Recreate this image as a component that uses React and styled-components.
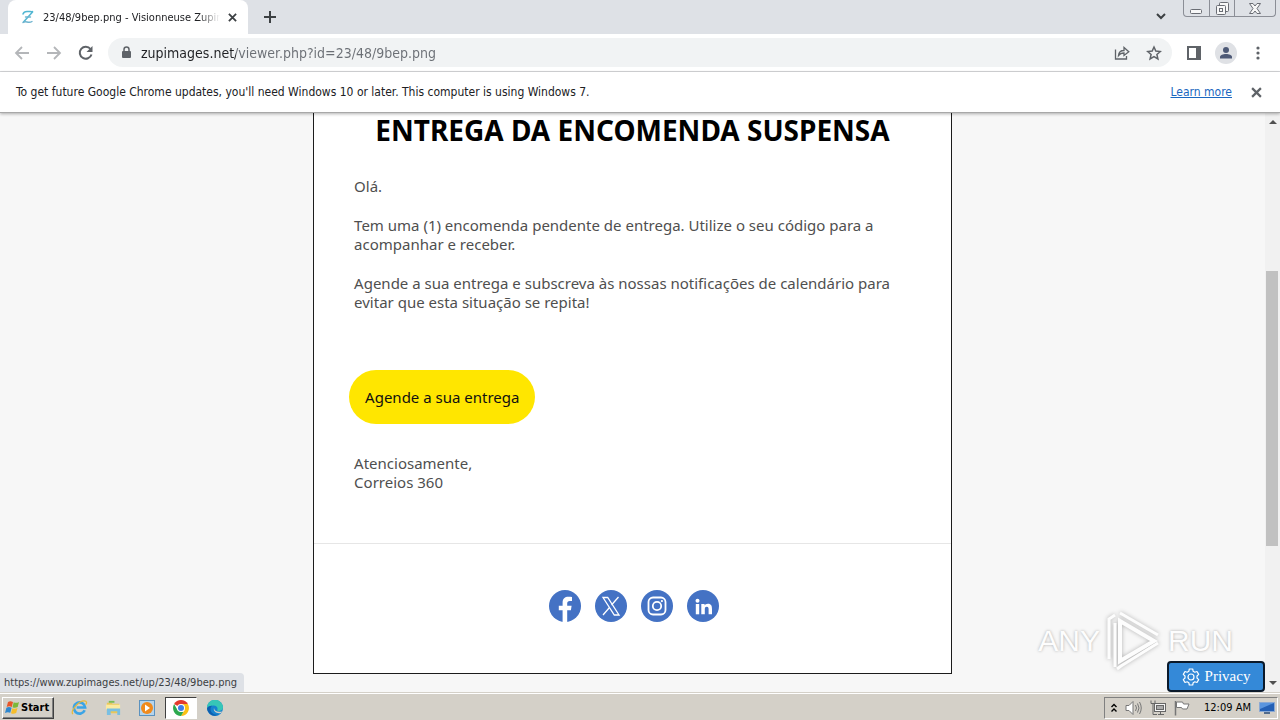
import React from 'react';
import styled, { createGlobalStyle } from 'styled-components';

const GlobalStyle = createGlobalStyle`
    * {
        box-sizing: border-box;
    }
    body {
        margin: 0;
        overflow: hidden;
        font-family: Tahoma, "DejaVu Sans Condensed", "DejaVu Sans", sans-serif;
        font-size: 12px;
        color: #202124;
    }
    svg {
        display: block;
    }
    button {
        font: inherit;
        color: inherit;
        border: 0;
        padding: 0;
        background: none;
    }
`;

const Desktop = styled.div`
    display: flex;
    flex-direction: column;
    height: 100vh;
`;

/* ---------- browser chrome ---------- */

const TabStrip = styled.header`
    display: flex;
    align-items: flex-end;
    height: 34px;
    flex: none;
    padding-left: 8px;
    background: #dee1e6;
`;

const Tab = styled.div`
    display: flex;
    align-items: center;
    width: 240px;
    height: 34px;
    margin-right: 5px;
    padding: 0 8px 0 12px;
    border-radius: 8px 8px 0 0;
    background: #fff;
`;

const TabTitle = styled.span`
    flex: 1;
    min-width: 0;
    margin: 0 4px 0 7px;
    font-size: 11px;
    white-space: nowrap;
    mask-image: linear-gradient(to right, #000 88%, transparent);
`;

const IconButton = styled.button`
    display: flex;
    align-items: center;
    justify-content: center;
    flex: none;
    width: ${props => props.$size || 32}px;
    height: ${props => props.$size || 32}px;
    border-radius: 50%;
    color: ${props => props.$color || '#5f6368'};
`;

const StripEnd = styled.div`
    display: flex;
    align-self: flex-start;
    margin-left: auto;
    padding-right: 4px;
    gap: 6px;
`;

const WindowControls = styled.div`
    display: flex;
    height: 17px;
    border: 1px solid #8b8e96;
    border-top: 0;
    border-radius: 0 0 4px 4px;
`;

const WindowButton = styled.button`
    display: flex;
    justify-content: center;
    align-items: center;
    width: ${props => (props.$wide ? 41 : 25)}px;
    color: #6a6d74;
    & + & {
        border-left: 1px solid #8b8e96;
    }
`;

const Toolbar = styled.div`
    display: flex;
    align-items: center;
    flex: none;
    height: 38px;
    padding: 0 6px;
    background: #fff;
    border-bottom: 1px solid #d6d7da;
`;

const Omnibox = styled.div`
    display: flex;
    align-items: center;
    flex: 1;
    height: 29px;
    margin: 0 6px;
    padding: 0 2px 0 12px;
    border-radius: 15px;
    background: #f1f3f4;
`;

const Address = styled.input`
    flex: 1;
    min-width: 0;
    margin-left: 9px;
    padding: 0;
    border: 0;
    outline: 0;
    font: inherit;
    font-size: 14px;
    color: transparent;
    /* host in dark, path in grey */
    background: linear-gradient(to right, #202124 95px, #6b6f75 95px);
    background-clip: text;
`;

const InfoBar = styled.div`
    display: flex;
    align-items: center;
    flex: none;
    position: relative;
    z-index: 1;
    height: 41px;
    padding: 0 12px 0 16px;
    background: #fff;
    border-bottom: 1px solid #a8a8a8;
    box-shadow: 0 1px 3px rgba(0, 0, 0, 0.3);
`;

const InfoLink = styled.a`
    margin-left: auto;
    margin-right: 12px;
    color: #1a67c0;
`;

/* ---------- page ---------- */

const Viewport = styled.main`
    position: relative;
    display: flex;
    flex: 1;
    min-height: 0;
    background: #f7f7f7;
`;

const Page = styled.div`
    flex: 1;
    min-width: 0;
    padding-bottom: 18px;
`;

const Sheet = styled.article`
    display: flex;
    flex-direction: column;
    width: 50.5%;
    margin: 0 auto;
    height: 100%;
    background: #fff;
    border: 1px solid #1c1c1c;
    border-top: 0;
`;

const Letter = styled.div`
    flex: 1;
    padding: 1px 40px 0;
    font-family: "Trebuchet MS", "Noto Sans", sans-serif;
    font-size: 15px;
    line-height: 19px;
    color: #4f4f4f;
`;

const Heading = styled.h1`
    margin: 0 0 31px;
    font-size: 28px;
    line-height: 32px;
    font-weight: 700;
    text-align: center;
    white-space: nowrap;
    color: #000;
`;

const Paragraph = styled.p`
    margin: 0 0 20px;
`;

const CallToAction = styled.button`
    height: 54px;
    margin: 58px 0 30px -5px;
    padding: 0 16px;
    border-radius: 27px;
    background: #ffe600;
    color: #111;
    display: block;
`;

const Social = styled.footer`
    display: flex;
    justify-content: center;
    gap: 14px;
    flex: none;
    height: 130px;
    padding-top: 46px;
    padding-left: 2px;
    border-top: 1px solid #e6e6e6;
`;

const SocialLink = styled.a`
    height: 32px;
`;

const ScrollBar = styled.div`
    display: flex;
    flex-direction: column;
    width: 15px;
    background: #f1f1f1;
`;

const ScrollArrow = styled.button`
    display: flex;
    align-items: center;
    justify-content: center;
    height: 18px;
    color: #505050;
`;

const ScrollGap = styled.div`
    flex: ${props => props.$share};
`;

const ScrollThumb = styled.div`
    flex: 275;
    margin: 0 2px 0 1px;
    background: #c1c1c1;
`;

const StatusBubble = styled.div`
    position: absolute;
    left: 0;
    bottom: 0;
    height: 19px;
    padding: 0 7px 0 4px;
    line-height: 20px;
    font-size: 11px;
    color: #3c4043;
    background: #dee1e6;
    border-top-right-radius: 4px;
`;

const PrivacyButton = styled.button`
    position: absolute;
    right: 15px;
    bottom: 0;
    display: flex;
    align-items: center;
    justify-content: center;
    gap: 5px;
    width: 98px;
    height: 31px;
    border: 2px solid #0b1a2b;
    border-radius: 4px;
    background: #3489d8;
    color: #fff;
    font-family: "Liberation Serif", serif;
    font-size: 15px;
`;

const Watermark = styled.div`
    position: absolute;
    right: 47px;
    bottom: 19px;
    display: flex;
    align-items: center;
    gap: 5px;
    font-family: "Liberation Sans", sans-serif;
    font-size: 30px;
    color: #fdfdfd;
    text-shadow: 0 0 3px #aaa;
    svg {
        filter: drop-shadow(0 0 2px #b0b0b0);
    }
`;

/* ---------- taskbar ---------- */

const TaskBar = styled.footer`
    display: flex;
    align-items: center;
    flex: none;
    position: relative;
    height: 28px;
    padding: 3px 2px 1px;
    background: #d4d0c8;
    border-top: 1px solid #d4d0c8;
    box-shadow: inset 0 1px 0 #fff;
    color: #000;
    font-size: 11px;
`;

const StartButton = styled.button`
    display: flex;
    align-items: center;
    gap: 1px;
    width: 52px;
    height: 22px;
    margin-right: 8px;
    padding-left: 1px;
    font-weight: 700;
    border: 1px solid;
    border-color: #fff #404040 #404040 #fff;
    box-shadow: inset -1px -1px 0 #808080;
`;

const TaskButton = styled.button`
    display: flex;
    align-items: center;
    justify-content: center;
    width: ${props => (props.$active ? 32 : 34)}px;
    height: 22px;
    ${props => props.$active && `
        margin: 0 1px;
        background: #fff;
        border: 1px solid;
        border-color: #404040 #fff #fff #404040;
    `}
`;

const Tray = styled.div`
    display: flex;
    align-items: center;
    height: 22px;
    margin-left: auto;
    padding: 0 2px 0 6px;
    gap: 8px;
    border: 1px solid;
    border-color: #808080 #fff #fff #808080;
`;

const Clock = styled.time`
    margin-left: 6px;
    white-space: nowrap;
`;

function Cross({ size = 10, width = 2 }) {
    return (
        <svg width={size} height={size} viewBox="0 0 10 10" stroke="currentColor" strokeWidth={width} fill="none">
            <path d="M1 1l8 8M9 1l-8 8" />
        </svg>
    );
}

function Arrow({ flip }) {
    return (
        <svg width="16" height="16" viewBox="0 0 16 16" fill="none" stroke="#b4b6b9" strokeWidth="1.800">
            <path d={flip ? 'M1 8h13M8 2l6 6-6 6' : 'M15 8H2M8 2L2 8l6 6'} />
        </svg>
    );
}

function Favicon() {
    return (
        <svg width="16" height="16" viewBox="0 0 16 16" fill="none" strokeLinecap="round">
            <path d="M3 5c1-3 3-2.500 5-2.500S12 3 13 2.500L3.500 13" stroke="#50b6d2" strokeWidth="1.500" />
            <path d="M5.500 8h5M3 13.500c3-2.500 5 1.500 9-1" stroke="#6fb4cf" strokeWidth="1.400" />
        </svg>
    );
}

function Facebook() {
    return (
        <svg width="32" height="32" viewBox="0 0 32 32">
            <circle cx="16" cy="16" r="16" fill="#4472c4" />
            <path fill="#fff" d="M13.600 32V20.300H9.800v-4.500h3.800v-3.300c0-3.900 2.300-5.800 5.800-5.800 1.300 0 2.600.2 3.600.4v4h-2.200c-1.900 0-2.600 1.100-2.600 2.500v2.200h4.400l-.7 4.500h-3.700V32z" />
        </svg>
    );
}

function XLogo() {
    return (
        <svg width="32" height="32" viewBox="0 0 32 32">
            <circle cx="16" cy="16" r="16" fill="#4472c4" />
            <path d="M8 7.500h4.700L24 25h-4.700zM23.500 7l-7 8M14.500 17.500L8 25" fill="none" stroke="#fff" strokeWidth="1.300" />
        </svg>
    );
}

function Instagram() {
    return (
        <svg width="32" height="32" viewBox="0 0 32 32" fill="none" stroke="#fff" strokeWidth="1.800">
            <circle cx="16" cy="16" r="16" fill="#4472c4" stroke="none" />
            <rect x="7.500" y="7.500" width="17" height="17" rx="4.500" />
            <circle cx="16" cy="16" r="4.200" />
            <circle cx="20.900" cy="11.100" r="1.100" fill="#fff" stroke="none" />
        </svg>
    );
}

function LinkedIn() {
    return (
        <svg width="32" height="32" viewBox="0 0 32 32">
            <circle cx="16" cy="16" r="16" fill="#4472c4" />
            <circle cx="10.500" cy="10.700" r="2" fill="#fff" />
            <rect x="8.800" y="14" width="3.400" height="10.300" fill="#fff" />
            <path fill="#fff" d="M14.300 14h3.300v1.400c.5-.9 1.700-1.700 3.300-1.700 3.500 0 4.100 2.300 4.100 5.200v5.400h-3.400v-4.800c0-1.300 0-2.800-1.800-2.800s-2 1.300-2 2.700v4.900h-3.500z" />
        </svg>
    );
}

function WindowsFlag() {
    return (
        <svg width="16" height="16" viewBox="0 0 16 16">
            <path fill="#e8562a" d="M4 2c2-1 3-.8 5 0L7.800 7C6 6 4.500 6 2.700 7z" />
            <path fill="#7cb83a" d="M9.700 2.300c2 .9 3.500.7 5.300-.3l-1.300 5c-2 1-3.500 1-5.200.2z" />
            <path fill="#2f87cf" d="M2.400 7.800c2-1 3.400-.8 5.200 0l-1.300 5C4.500 12 3 12 1 13z" />
            <path fill="#f6bd2b" d="M8.300 8.200c2 .8 3.400.8 5.200-.2l-1.300 5c-2 1-3.500 1-5.200.2z" />
        </svg>
    );
}

function Explorer() {
    return (
        <svg width="17" height="17" viewBox="0 0 18 18" fill="none">
            <path d="M14.500 12a6 6 0 1 1 .5-3H6" stroke="#3ba4e6" strokeWidth="2.800" />
            <path d="M2 16C-1 13 8 2 14 2c3 0 3 2 1.500 4" stroke="#e8b93a" strokeWidth="1.300" />
        </svg>
    );
}

function Folder() {
    return (
        <svg width="17" height="17" viewBox="0 0 18 18">
            <path fill="#e9c75a" d="M2 4h5l1 1h7v10H2z" />
            <path fill="#fbeaa0" d="M1 6h15v5H1z" />
            <path fill="#79bfe3" d="M2 10h14v7h-3v-4H6v4H2z" />
            <path fill="#7bbd53" d="M4 2h6v2H4z" />
        </svg>
    );
}

function MediaPlayer() {
    return (
        <svg width="16" height="16" viewBox="0 0 16 16">
            <rect x=".5" y=".5" width="15" height="15" fill="#b5d4ec" stroke="#5b92bf" />
            <circle cx="8" cy="8" r="6" fill="#f08a1c" />
            <path fill="#fff" d="M6 4.500l5 3.500-5 3.500z" />
        </svg>
    );
}

function ChromeLogo() {
    return (
        <svg width="16" height="16" viewBox="0 0 16 16">
            <path fill="#e33b2e" d="M8 8L1.100 4a8 8 0 0 1 13.800 0z" />
            <path fill="#fbc116" d="M8 8V4h6.900A8 8 0 0 1 8 16l3.500-6z" />
            <path fill="#2da94f" d="M8 16A8 8 0 0 1 1.100 4L4.500 10 8 12l2.500-.3z" />
            <circle cx="8" cy="8" r="4" fill="#fff" />
            <circle cx="8" cy="8" r="3" fill="#3f7fe8" />
        </svg>
    );
}

function EdgeLogo() {
    return (
        <svg width="16" height="16" viewBox="0 0 16 16">
            <circle cx="8" cy="8" r="8" fill="#1683cf" />
            <path fill="#37c6b7" d="M0 8a8 8 0 0 1 16-.5c0 3-4 4-6 3 1.500-2 0-5-3.500-5C3 5.500.5 7 0 8z" />
            <path fill="#0f5fae" d="M3.500 9c0 4 3.500 6 8 5.800A8 8 0 0 1 0 8.500c1-2 2.500-2.700 5-2.700C4 6.500 3.500 8 3.500 9z" />
            <path fill="#d4d0c8" d="M7 8c0 3 3.500 4.500 8 3.500l-1 1.500c-5 1-8-2-7-5z" />
        </svg>
    );
}

function AnyRunMark() {
    return (
        <svg width="58" height="64" viewBox="0 0 58 64" fill="none" stroke="#fdfdfd" strokeWidth="4">
            <path d="M15 12v40l34-20z" />
            <path d="M4 50V10l6-4M10 58V14M15 4l38 22M53 34L16 57l-4 3" strokeWidth="3" />
        </svg>
    );
}

function App() {
    return (
        <Desktop>
            <GlobalStyle />
            <TabStrip>
                <Tab>
                    <Favicon />
                    <TabTitle>23/48/9bep.png - Visionneuse Zupim</TabTitle>
                    <IconButton $size={16} $color="#3c4043" aria-label="Close tab"><Cross size={9} /></IconButton>
                </Tab>
                <IconButton $size={34} $color="#3c4043" aria-label="New tab">
                    <svg width="12" height="12" viewBox="0 0 12 12" stroke="currentColor" strokeWidth="2">
                        <path d="M6 0v12M0 6h12" />
                    </svg>
                </IconButton>
                <StripEnd>
                    <IconButton $color="#3c4043" aria-label="Search tabs">
                        <svg width="10" height="7" viewBox="0 0 10 7" fill="none" stroke="currentColor" strokeWidth="2">
                            <path d="M1 1l4 4 4-4" />
                        </svg>
                    </IconButton>
                    <WindowControls>
                        <WindowButton aria-label="Minimize">
                            <svg width="13" height="14" viewBox="0 0 13 14" fill="#f7f7f7" stroke="currentColor">
                                <rect x=".5" y="8.500" width="11" height="4" rx="1" />
                            </svg>
                        </WindowButton>
                        <WindowButton aria-label="Restore">
                            <svg width="13" height="13" viewBox="0 0 13 13" fill="#f7f7f7" stroke="currentColor">
                                <rect x="3.500" y=".5" width="9" height="9" rx="1" />
                                <rect x=".5" y="3.500" width="9" height="9" rx="1" />
                                <rect x="3.500" y="6.500" width="3" height="3" />
                            </svg>
                        </WindowButton>
                        <WindowButton $wide aria-label="Close">
                            <svg width="12" height="11" viewBox="0 0 12 11" fill="#f7f7f7" stroke="currentColor">
                                <path d="M.5.5h3.500l2 2.500 2-2.500h3.500L8 5.500l3.500 5H8L6 8l-2 2.500H.5L4 5.500z" />
                            </svg>
                        </WindowButton>
                    </WindowControls>
                </StripEnd>
            </TabStrip>

            <Toolbar>
                <IconButton aria-label="Back"><Arrow /></IconButton>
                <IconButton aria-label="Forward"><Arrow flip /></IconButton>
                <IconButton aria-label="Reload">
                    <svg width="16" height="16" viewBox="0 0 16 16" fill="none" stroke="currentColor" strokeWidth="2">
                        <path d="M13.500 9.500A6 6 0 1 1 12.500 4" />
                        <path d="M14.500 1v6h-6z" fill="currentColor" stroke="none" />
                    </svg>
                </IconButton>
                <Omnibox>
                    <svg width="12" height="14" viewBox="0 0 12 14" fill="none">
                        <rect x="2" y="5" width="9" height="7" rx="1" fill="#5f6368" />
                        <path d="M4 5.500V3.500a2.500 2.500 0 0 1 5 0v2" stroke="#5f6368" strokeWidth="1.500" />
                    </svg>
                    <Address aria-label="Address" defaultValue="zupimages.net/viewer.php?id=23/48/9bep.png" />
                    <IconButton aria-label="Share">
                        <svg width="16" height="16" viewBox="0 0 16 16" fill="none" stroke="currentColor" strokeWidth="1.300">
                            <path d="M1.500 4.500v9.500h11v-3" />
                            <path d="M4.500 10.500c.3-3.500 2-5 5.500-5V2.500l4.800 4.200L10 10.500V8c-2.500 0-4.200.7-5.500 2.500z" />
                        </svg>
                    </IconButton>
                    <IconButton aria-label="Bookmark">
                        <svg width="16" height="16" viewBox="0 0 16 16" fill="none" stroke="currentColor" strokeWidth="1.500">
                            <path d="M8 2l1.800 4.100 4.500.4-3.400 3 1 4.400L8 11.600l-3.900 2.300 1-4.400-3.400-3 4.500-.4z" />
                        </svg>
                    </IconButton>
                </Omnibox>
                <IconButton aria-label="Side panel">
                    <svg width="14" height="14" viewBox="0 0 14 14">
                        <path fill="#5f6368" fillRule="evenodd" d="M0 0h14v14H0zM2 2v10h7V2z" />
                    </svg>
                </IconButton>
                <IconButton aria-label="Profile">
                    <svg width="22" height="22" viewBox="0 0 22 22">
                        <circle cx="11" cy="11" r="11" fill="#dfe1e5" />
                        <circle cx="11" cy="8" r="3" fill="#4d5976" />
                        <path fill="#4d5976" d="M5 16.500v-1.500c0-2 3-3 6-3s6 1 6 3v1.500z" />
                    </svg>
                </IconButton>
                <IconButton aria-label="Menu">
                    <svg width="4" height="14" viewBox="0 0 4 14" fill="#5f6368">
                        <circle cx="2" cy="2" r="1.600" />
                        <circle cx="2" cy="7" r="1.600" />
                        <circle cx="2" cy="12" r="1.600" />
                    </svg>
                </IconButton>
            </Toolbar>

            <InfoBar>
                <span>To get future Google Chrome updates, you'll need Windows 10 or later. This computer is using Windows 7.</span>
                <InfoLink href="#learn">Learn more</InfoLink>
                <IconButton $size={24} aria-label="Dismiss"><Cross size={11} /></IconButton>
            </InfoBar>

            <Viewport>
                <Page>
                    <Sheet>
                        <Letter>
                            <Heading>ENTREGA DA ENCOMENDA SUSPENSA</Heading>
                            <Paragraph>Olá.</Paragraph>
                            <Paragraph>
                                Tem uma (1) encomenda pendente de entrega. Utilize o seu código para a<br />
                                acompanhar e receber.
                            </Paragraph>
                            <Paragraph>
                                Agende a sua entrega e subscreva às nossas notificações de calendário para<br />
                                evitar que esta situação se repita!
                            </Paragraph>
                            <CallToAction>Agende a sua entrega</CallToAction>
                            <Paragraph>
                                Atenciosamente,<br />
                                Correios 360
                            </Paragraph>
                        </Letter>
                        <Social>
                            <SocialLink href="#facebook" aria-label="Facebook"><Facebook /></SocialLink>
                            <SocialLink href="#x" aria-label="X"><XLogo /></SocialLink>
                            <SocialLink href="#instagram" aria-label="Instagram"><Instagram /></SocialLink>
                            <SocialLink href="#linkedin" aria-label="LinkedIn"><LinkedIn /></SocialLink>
                        </Social>
                    </Sheet>
                </Page>
                <ScrollBar>
                    <ScrollArrow aria-label="Scroll up">
                        <svg width="8" height="4" viewBox="0 0 8 4" fill="currentColor"><path d="M0 4l4-4 4 4z" /></svg>
                    </ScrollArrow>
                    <ScrollGap $share={140} />
                    <ScrollThumb />
                    <ScrollGap $share={128} />
                    <ScrollArrow aria-label="Scroll down">
                        <svg width="8" height="4" viewBox="0 0 8 4" fill="currentColor"><path d="M0 0l4 4 4-4z" /></svg>
                    </ScrollArrow>
                </ScrollBar>
                <Watermark>
                    <span>ANY</span>
                    <AnyRunMark />
                    <span>RUN</span>
                </Watermark>
                <StatusBubble>https://www.zupimages.net/up/23/48/9bep.png</StatusBubble>
                <PrivacyButton>
                    <svg width="18" height="18" viewBox="0 0 18 18" fill="none" stroke="#fff" strokeWidth="1.200" strokeLinejoin="round">
                        <path d="M7.300 1h3.400l.5 2.300 1.600.9 2.200-.7 1.700 2.900L15 8v2l1.700 1.600-1.700 2.900-2.200-.7-1.600.9-.5 2.300H7.300l-.5-2.300-1.600-.9-2.200.7-1.700-2.900L3 10V8L1.300 6.400 3 3.500l2.200.7 1.600-.9z" />
                        <circle cx="9" cy="9" r="3" />
                    </svg>
                    Privacy
                </PrivacyButton>
            </Viewport>

            <TaskBar>
                <StartButton><WindowsFlag />Start</StartButton>
                <TaskButton aria-label="Internet Explorer"><Explorer /></TaskButton>
                <TaskButton aria-label="Explorer"><Folder /></TaskButton>
                <TaskButton aria-label="Media Player"><MediaPlayer /></TaskButton>
                <TaskButton $active aria-label="Chrome"><ChromeLogo /></TaskButton>
                <TaskButton aria-label="Edge"><EdgeLogo /></TaskButton>
                <Tray>
                    <svg width="6" height="10" viewBox="0 0 6 10" fill="none" stroke="#000" strokeWidth="1.400">
                        <path d="M.5 4L3 1.500 5.500 4M.5 8.500L3 6l2.500 2.500" />
                    </svg>
                    <svg width="17" height="16" viewBox="0 0 17 16" fill="#fff" stroke="#777">
                        <path d="M1 5.500h3l4-4v13l-4-4H1z" />
                        <path d="M10.500 5q2 3 0 6M12.500 3.500q3 4.500 0 9M14.500 2q3.500 6 0 12" fill="none" />
                    </svg>
                    <svg width="16" height="16" viewBox="0 0 16 16" fill="#f4f4f4" stroke="#666">
                        <rect x="4.500" y="3.500" width="11" height="8" />
                        <rect x="6.500" y="5.500" width="7" height="4" fill="#aaa" />
                        <path d="M1 .5v3h4v-3M3 4v10.500h4M8 14.500h6M10.500 12v2" fill="none" />
                    </svg>
                    <svg width="16" height="16" viewBox="0 0 16 16" fill="#fff" stroke="#777">
                        <path d="M1.500 1v14.500" strokeWidth="1.500" />
                        <path d="M2.500 2h6l1 2h5.500l-2 5H8.500l-1-1.500h-5z" />
                    </svg>
                    <Clock>12:09 AM</Clock>
                    <svg width="16" height="14" viewBox="0 0 16 14">
                        <path fill="#2460b5" stroke="#8aa9d4" d="M.5 1.500h15v9H.5z" />
                        <path fill="#5a95de" d="M1 2h14L1 8z" />
                        <path fill="#526b8c" d="M5 11h6v2H5z" />
                    </svg>
                </Tray>
            </TaskBar>
        </Desktop>
    );
}

export default App;
